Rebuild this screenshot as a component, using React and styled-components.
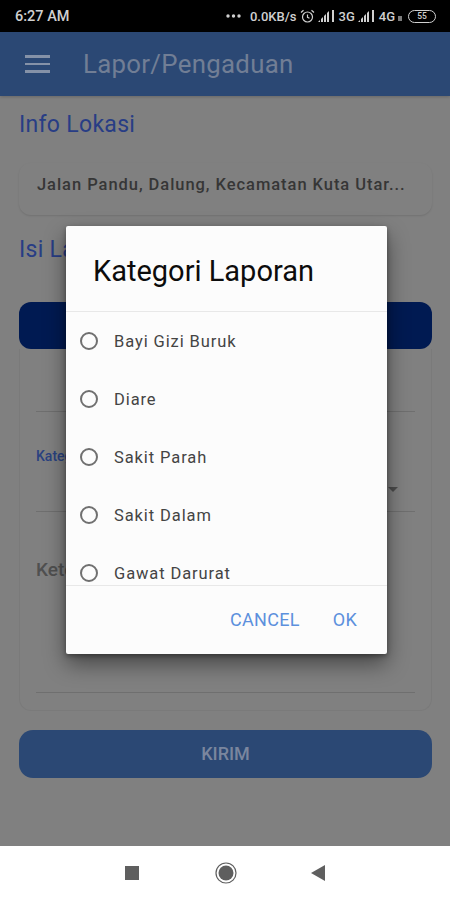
import React from "react";
import styled, { createGlobalStyle } from "styled-components";

const Global = createGlobalStyle`
  html, body { margin: 0; padding: 0; background: #808080; }
  * { box-sizing: border-box; }
  #root { width: 450px; height: 900px; overflow: hidden; }
`;

const Screen = styled.div`
  position: relative;
  width: 450px;
  height: 900px;
  display: flex;
  flex-direction: column;
  font-family: Roboto, "Liberation Sans", sans-serif;
  background: #808080;
  overflow: hidden;
`;

const StatusBar = styled.div`
  height: 32px;
  flex: none;
  background: #000;
  color: #d0d0d0;
  display: flex;
  align-items: center;
  justify-content: space-between;
  padding: 0 14px 0 15px;
  font-size: 14.5px;
  font-weight: 500;
`;

const StatusIcons = styled.div`
  display: flex;
  align-items: center;
  gap: 3px;
  font-size: 13px;
`;

const Dots = styled.svg`
  margin-right: 6px;
`;

const TinyBox = styled.span`
  width: 4px;
  height: 5px;
  margin-top: 4px;
  background: #7a7a7a;
`;

const BatteryPill = styled.span`
  width: 28px;
  height: 13px;
  margin-left: 3px;
  border: 1.5px solid #d0d0d0;
  border-radius: 7px;
  display: flex;
  align-items: center;
  justify-content: center;
  font-size: 8.5px;
  line-height: 1;
`;

const AppBar = styled.header`
  height: 64px;
  flex: none;
  background: #2b4874;
  display: flex;
  align-items: center;
  gap: 33px;
  padding: 0 0 0 25px;
  box-shadow: 0 1px 3px rgba(0, 0, 0, 0.2);
  position: relative;
`;

const Burger = styled.div`
  width: 25px;
  display: flex;
  flex-direction: column;
  gap: 5px;
  span {
    height: 2.5px;
    background: #8592a8;
  }
`;

const AppTitle = styled.h1`
  margin: 0;
  font-size: 25.8px;
  font-weight: 400;
  color: #717e95;
  letter-spacing: 0.3px;
`;

const Content = styled.main`
  flex: 1;
  padding: 14px 18px 0 19px;
  display: flex;
  flex-direction: column;
  background: #808080;
`;

const SectionTitle = styled.h2`
  margin: ${(p) => p.$top}px 0 0;
  height: 30px;
  line-height: 30px;
  font-size: 23px;
  font-weight: 400;
  color: #283d85;
  letter-spacing: 0.3px;
`;

const LocationCard = styled.div`
  margin-top: 23px;
  height: 52px;
  padding: 0 18px 10px;
  display: flex;
  align-items: center;
  font-size: 16.5px;
  font-weight: 500;
  color: #363636;
  letter-spacing: 0.95px;
  border-radius: 12px;
  box-shadow: 0 1px 2px rgba(0, 0, 0, 0.12);
  white-space: nowrap;
`;

const TabBar = styled.div`
  margin-top: 37px;
  height: 47px;
  background: #001a52;
  border-radius: 12px;
`;

const FormCard = styled.div`
  height: 362px;
  padding: 0 16px;
  border-radius: 0 0 12px 12px;
  border: 1px solid #7a7a7a;
  border-top: none;
  display: flex;
  flex-direction: column;
`;

const FormRow = styled.div`
  position: relative;
  height: ${(p) => p.$height}px;
  flex: none;
  border-bottom: 1px solid #6f6f6f;
  padding-top: ${(p) => p.$pad}px;
`;

const RowLabel = styled.span`
  display: block;
  font-size: 14px;
  font-weight: 500;
  color: #2a4280;
`;

const BigLabel = styled.span`
  display: block;
  font-size: 19px;
  font-weight: 500;
  color: #505050;
`;

const Caret = styled.span`
  position: absolute;
  right: 17px;
  top: 75px;
  width: 0;
  height: 0;
  border-left: 5px solid transparent;
  border-right: 5px solid transparent;
  border-top: 5px solid #4c4c4c;
`;

const SendButton = styled.div`
  margin-top: 19px;
  height: 48px;
  padding-bottom: 2px;
  background: #2b4874;
  border-radius: 14px;
  display: flex;
  align-items: center;
  justify-content: center;
  font-size: 18px;
  font-weight: 500;
  color: #7a869e;
`;

const NavBar = styled.nav`
  height: 54px;
  flex: none;
  background: #fff;
  display: grid;
  grid-template-columns: 132px 94px 92px;
  align-items: center;
  justify-items: end;
`;

const NavSlot = styled.div`
  display: flex;
  justify-content: center;
  width: 30px;
  transform: translateX(15px);
`;

const Dialog = styled.section`
  position: absolute;
  left: 66px;
  top: 226px;
  width: 321px;
  height: 428px;
  background: #fcfcfc;
  border-radius: 2px;
  box-shadow: 0 10px 22px rgba(0, 0, 0, 0.45), 0 2px 5px rgba(0, 0, 0, 0.35);
  display: flex;
  flex-direction: column;
`;

const DialogTitle = styled.h3`
  margin: 0;
  height: 86px;
  padding: 4px 0 0 27px;
  display: flex;
  align-items: center;
  font-size: 29px;
  font-weight: 400;
  color: #0c0c0c;
  border-bottom: 1px solid #e8e8e8;
`;

const OptionList = styled.div`
  height: 274px;
  flex: none;
  overflow: hidden;
  border-bottom: 1px solid #e8e8e8;
`;

const Option = styled.div`
  height: 58px;
  display: flex;
  align-items: center;
  padding-left: 14px;
  gap: 16px;
  font-size: 16.5px;
  color: #444;
  letter-spacing: 0.9px;
`;

const Radio = styled.span`
  width: 18px;
  height: 18px;
  flex: none;
  border: 2px solid #707070;
  border-radius: 50%;
`;

const DialogActions = styled.div`
  flex: 1;
  display: flex;
  justify-content: flex-end;
  align-items: center;
  gap: 33px;
  padding: 0 30px 2px 0;
  font-size: 18px;
  font-weight: 400;
  color: #5c90dd;
  letter-spacing: 0.3px;
`;

const Bars = () => (
  <svg width="18" height="14" viewBox="0 0 18 14" fill="#d0d0d0">
    <path d="M0 13 L2 11 V13Z M3 13 V10 L5 8 V13Z M6 13 V7 L8 5 V13Z M9 13 V4 L11 2 V13Z" />
    <rect x="14" y="1" width="2" height="12" />
  </svg>
);

const Alarm = () => (
  <svg width="15" height="15" viewBox="0 0 15 15" fill="none" stroke="#d0d0d0" strokeWidth="1.2">
    <circle cx="7.5" cy="8" r="5" />
    <path d="M7.5 5.5V8.3L9.5 9.3M1 3.5L3.5 1.2M14 3.5L11.5 1.2" />
  </svg>
);

const options = ["Bayi Gizi Buruk", "Diare", "Sakit Parah", "Sakit Dalam", "Gawat Darurat"];

export default function App() {
  return (
    <Screen>
      <Global />
      <StatusBar>
        <span>6:27 AM</span>
        <StatusIcons>
          <Dots width="15" height="6" viewBox="0 0 15 6" fill="#d0d0d0">
            <circle cx="2" cy="3" r="1.7" />
            <circle cx="7.5" cy="3" r="1.7" />
            <circle cx="13" cy="3" r="1.7" />
          </Dots>
          <span>0.0KB/s</span>
          <Alarm />
          <Bars />
          <span>3G</span>
          <Bars />
          <span>4G</span>
          <TinyBox />
          <BatteryPill>55</BatteryPill>
        </StatusIcons>
      </StatusBar>
      <AppBar>
        <Burger>
          <span />
          <span />
          <span />
        </Burger>
        <AppTitle>Lapor/Pengaduan</AppTitle>
      </AppBar>
      <Content>
        <SectionTitle $top={0}>Info Lokasi</SectionTitle>
        <LocationCard>Jalan Pandu, Dalung, Kecamatan Kuta Utar...</LocationCard>
        <SectionTitle $top={20}>Isi Laporan</SectionTitle>
        <TabBar />
        <FormCard>
          <FormRow $height={63} $pad={0} />
          <FormRow $height={100} $pad={36}>
            <RowLabel>Kategori</RowLabel>
            <Caret />
          </FormRow>
          <FormRow $height={181} $pad={46}>
            <BigLabel>Keterangan</BigLabel>
          </FormRow>
        </FormCard>
        <SendButton>KIRIM</SendButton>
      </Content>
      <NavBar>
        <NavSlot>
          <svg width="14" height="14" viewBox="0 0 14 14"><rect width="14" height="14" fill="#5f5f5f" /></svg>
        </NavSlot>
        <NavSlot>
          <svg width="22" height="22" viewBox="0 0 22 22">
            <circle cx="11" cy="11" r="10" fill="none" stroke="#5f5f5f" strokeWidth="1.2" />
            <circle cx="11" cy="11" r="7.5" fill="#5f5f5f" />
          </svg>
        </NavSlot>
        <NavSlot>
          <svg width="14" height="16" viewBox="0 0 14 16"><path d="M14 0V16L0 8Z" fill="#5f5f5f" /></svg>
        </NavSlot>
      </NavBar>
      <Dialog>
        <DialogTitle>Kategori Laporan</DialogTitle>
        <OptionList>
          {options.map((o) => (
            <Option key={o}>
              <Radio />
              {o}
            </Option>
          ))}
        </OptionList>
        <DialogActions>
          <span>CANCEL</span>
          <span>OK</span>
        </DialogActions>
      </Dialog>
    </Screen>
  );
}
